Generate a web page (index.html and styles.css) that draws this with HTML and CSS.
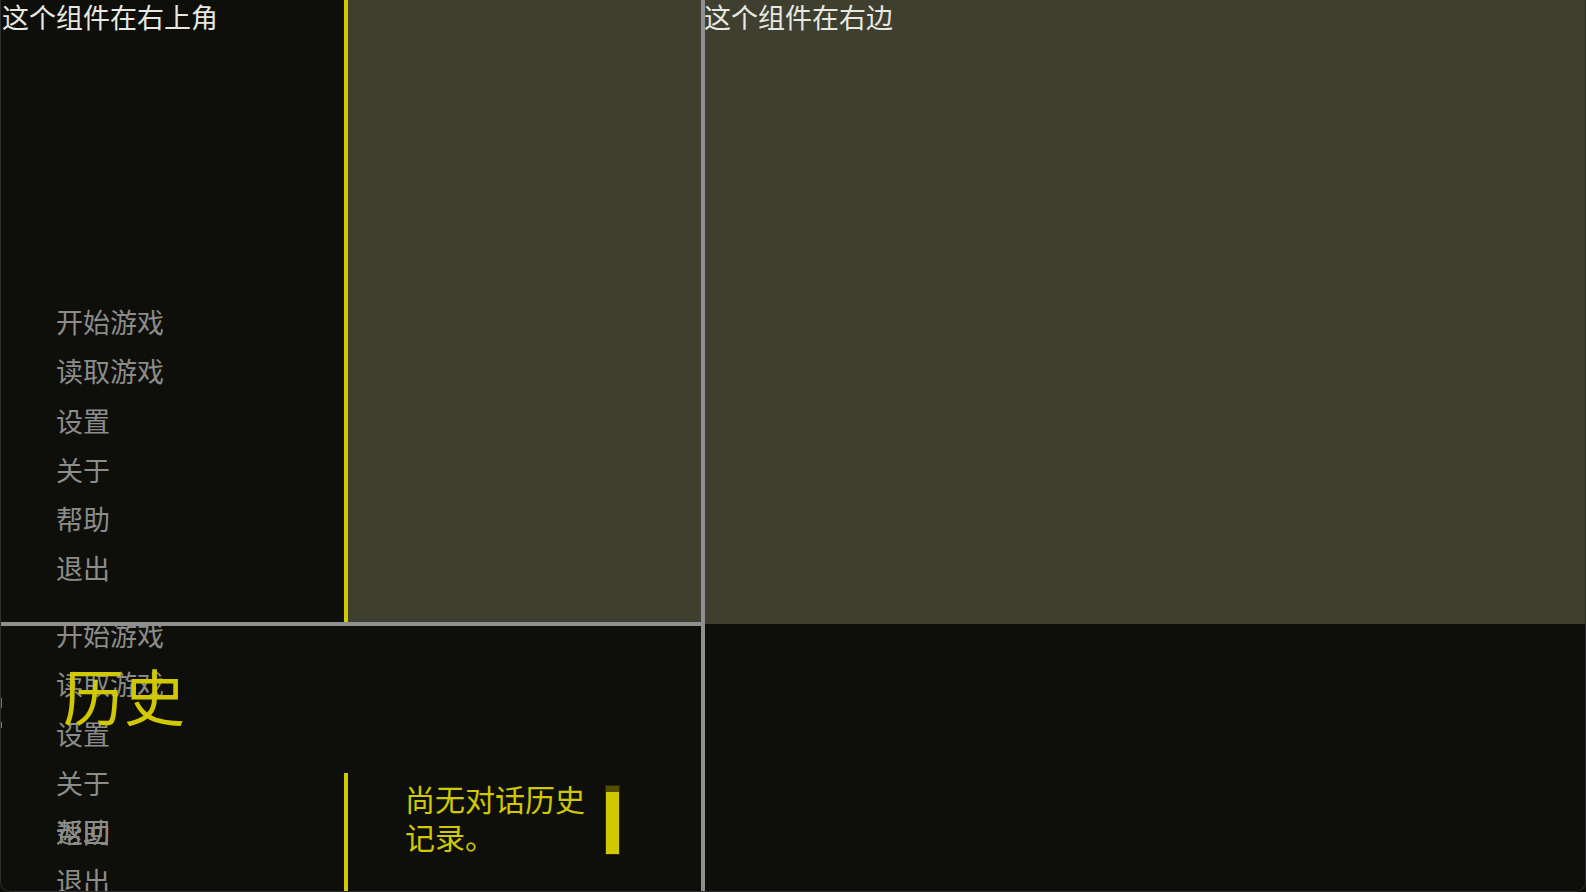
FILE: index.html
```html
<!DOCTYPE html>
<html lang="zh-CN">
<head>
<meta charset="utf-8">
<title>UI</title>
<link rel="stylesheet" href="styles.css">
</head>
<body>
<div class="app">
  <div class="left-col">
    <div class="top-left">
      <div class="sidebar">
        <div class="title">这个组件在右上角</div>
        <ul class="menu">
          <li>开始游戏</li>
          <li>读取游戏</li>
          <li>设置</li>
          <li>关于</li>
          <li>帮助</li>
          <li>退出</li>
        </ul>
      </div>
      <div class="yline"></div>
      <div class="olive"></div>
    </div>
    <div class="hline"></div>
    <div class="bottom-left">
      <ul class="menu menu-ghost">
        <li>开始游戏</li>
        <li>读取游戏</li>
        <li>设置</li>
        <li>关于</li>
        <li class="stack"><span>帮助</span><span class="over">返回</span></li>
        <li>退出</li>
      </ul>
      <div class="history">
        <div class="history-title">历史</div>
        <div class="history-body">
          <div class="history-spacer"></div>
          <div class="history-content">
            <p class="empty">尚无对话历史记录。</p>
            <div class="scrollbar"><div class="thumb"></div></div>
          </div>
        </div>
      </div>
      <span class="mark mark-blue"></span>
      <span class="mark mark-orange"></span>
    </div>
  </div>
  <div class="vline"></div>
  <div class="right-col">
    <div class="right-top">
      <div class="title">这个组件在右边</div>
    </div>
    <div class="right-bottom"></div>
  </div>
</div>
</body>
</html>
```

FILE: styles.css
```css
* { box-sizing: border-box; }
html, body {
  margin: 0;
  padding: 0;
  background: #0e0f0b;
}
body {
  font-family: "Noto Sans CJK SC", "Noto Sans", sans-serif;
}
.app {
  width: 1586px;
  height: 892px;
  display: flex;
  border: 1px solid #2e2e2e;
  border-top: none;
  border-radius: 0 0 10px 10px;
  overflow: hidden;
  background: #0e0f0b;
}
.left-col {
  width: 700px;
  display: flex;
  flex-direction: column;
}
.top-left {
  height: 622px;
  display: flex;
}
.sidebar {
  width: 343px;
  background: #0e0f0b;
  display: flex;
  flex-direction: column;
}
.title {
  font-size: 27px;
  line-height: 33px;
  color: #e8e8e2;
  padding-left: 1px;
}
.menu {
  list-style: none;
  margin: 0;
  padding: 0 0 0 55px;
  font-size: 27px;
  color: #8c8c8a;
}
.sidebar .menu {
  margin-top: 264px;
}
.menu li {
  height: 49.3px;
  line-height: 49.3px;
}
.yline {
  width: 4px;
  background: #d0c800;
}
.olive {
  flex: 1;
  background: #3e3f2f;
}
.hline {
  height: 4px;
  background: #8f8f8f;
}
.bottom-left {
  flex: 1;
  position: relative;
  overflow: hidden;
  background: #0e0f0b;
}
.menu-ghost {
  position: absolute;
  left: 0;
  top: -16px;
}
.stack {
  position: relative;
}
.menu .stack .over {
  position: absolute;
  left: 0;
  top: 0;
}
.history {
  position: relative;
  height: 100%;
  display: flex;
  flex-direction: column;
}
.history-title {
  padding: 38px 0 0 62px;
  font-size: 61px;
  line-height: 61px;
  color: #d0c800;
}
.history-body {
  margin-top: 48px;
  flex: 1;
  display: flex;
}
.history-spacer {
  width: 343px;
}
.history-content {
  flex: 1;
  border-left: 4px solid #d0c800;
  display: flex;
  align-items: flex-start;
  padding: 6px 0 0 57px;
}
.empty {
  margin: 0;
  width: 182px;
  font-size: 30px;
  line-height: 38px;
  color: #d0c800;
}
.scrollbar {
  margin: 6px 0 0 18px;
  width: 15px;
  height: 70px;
  background: #545000;
  border: 1px solid #2a2800;
  padding-top: 6px;
}
.thumb {
  height: 100%;
  background: #d0c800;
}
.mark {
  position: absolute;
  left: -1px;
  width: 2px;
}
.mark-blue { top: 72px; height: 10px; background: #4d7e9c; }
.mark-orange { top: 96px; height: 6px; background: #a8761e; }
.vline {
  width: 4px;
  background: #8f8f8f;
}
.right-col {
  flex: 1;
  display: flex;
  flex-direction: column;
}
.right-top {
  height: 624px;
  background: #3e3f2f;
}
.right-top .title {
  padding-left: 0;
  margin-left: -1px;
}
.right-bottom {
  flex: 1;
  background: #0e0f0b;
}
```
